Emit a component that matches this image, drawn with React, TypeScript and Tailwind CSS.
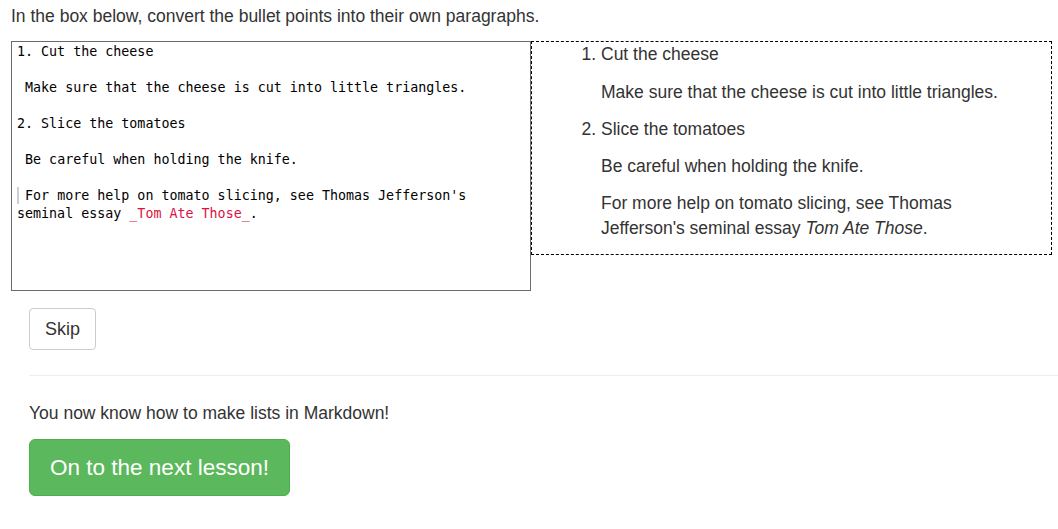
import React from "react";

export default function App() {
  const mono = { fontFamily: '"DejaVu Sans Mono", "Liberation Mono", monospace' };
  return (
    <div className="min-h-[529px] w-[1058px] overflow-hidden bg-white text-[#333] font-['Liberation_Sans',Arial,sans-serif]">
      <div className="pl-[11px]">
        <p className="pt-[5px] text-[17.5px] leading-[22px]">
          In the box below, convert the bullet points into their own paragraphs.
        </p>
        <div className="mt-[14px] flex items-start">
          <div
            className="h-[250px] w-[520px] shrink-0 border border-[#6b6b6b] pl-[5px] pr-[4px] pt-[1px] text-[13.33px] leading-[18px] text-black whitespace-pre-wrap"
            style={mono}
          >
            <div>1. Cut the cheese</div>
            <div>&nbsp;</div>
            <div> Make sure that the cheese is cut into little triangles.</div>
            <div>&nbsp;</div>
            <div>2. Slice the tomatoes</div>
            <div>&nbsp;</div>
            <div> Be careful when holding the knife.</div>
            <div>&nbsp;</div>
            <div>
              <span className="relative">
                <span className="absolute left-0 top-[-1px] h-[17px] w-[2px] bg-[#cfcfcf]" />
              </span>
              {" For more help on tomato slicing, see Thomas Jefferson's seminal essay "}
              <span className="text-[#dd1144]">_Tom Ate Those_</span>.
            </div>
          </div>
          <div className="w-[521px] shrink-0 border border-dashed border-black pl-[29px] pr-[30px] text-[17.5px] leading-[25px]">
            <ol className="list-decimal pl-[40px]">
              <li>
                <p className="mb-[13px]">Cut the cheese</p>
                <p className="mb-[12px]">Make sure that the cheese is cut into little triangles.</p>
              </li>
              <li>
                <p className="mb-[12px]">Slice the tomatoes</p>
                <p className="mb-[12px]">Be careful when holding the knife.</p>
                <p className="mb-[13px]">
                  For more help on tomato slicing, see Thomas Jefferson's seminal essay <em>Tom Ate Those</em>.
                </p>
              </li>
            </ol>
          </div>
        </div>
      </div>
      <div className="pl-[29px]">
        <button className="mt-[17px] h-[42px] rounded-[4px] border border-[#ccc] bg-white px-[15px] text-[18px] leading-[20px] text-[#333]">
          Skip
        </button>
        <hr className="mt-[25px] border-0 border-t border-[#eee]" />
        <p className="mt-[25px] text-[17.5px] leading-[25px]">You now know how to make lists in Markdown!</p>
        <button className="mt-[13px] h-[57px] w-[261px] rounded-[6px] border border-[#4cae4c] bg-[#5cb85c] text-[22.5px] leading-[33px] text-white">
          On to the next lesson!
        </button>
      </div>
    </div>
  );
}
